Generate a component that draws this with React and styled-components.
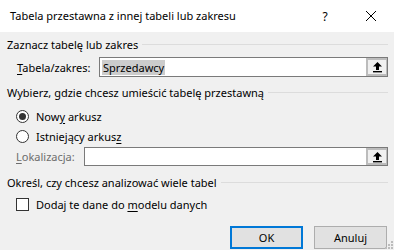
import React, { useState } from "react";
import styled, { createGlobalStyle } from "styled-components";

const GlobalStyle = createGlobalStyle`
  html, body {
    margin: 0;
    padding: 0;
    background: #f0f0f0;
  }
  * { box-sizing: border-box; }
`;

const Dialog = styled.div`
  width: 394px;
  height: 250px;
  background: #f0f0f0;
  font-family: "Noto Sans", "Open Sans", sans-serif;
  font-size: 11px;
  color: #000;
  position: relative;
  overflow: hidden;
`;

const TitleBar = styled.div`
  height: 32px;
  background: #fff;
  display: flex;
  align-items: center;
  padding-left: 10px;
  font-size: 11px;
`;

const Title = styled.div`
  flex: 1;
  padding-bottom: 2px;
`;

const TitleButton = styled.div`
  width: 46px;
  height: 32px;
  display: flex;
  align-items: center;
  justify-content: center;
  font-size: 12px;
`;

const Body = styled.div`
  padding: 3px 6px 0 7px;
`;

const GroupTitle = styled.div`
  display: flex;
  align-items: center;
  height: 18px;
  margin-top: ${p => p.top || 0}px;
  &::after {
    content: "";
    flex: 1;
    height: 1px;
    background: #dcdcdc;
    margin-left: 4px;
    margin-top: 1px;
  }
`;

const FieldRow = styled.div`
  display: flex;
  align-items: center;
  margin-top: ${p => p.top || 0}px;
  padding-left: ${p => p.indent || 10}px;
`;

const Label = styled.div`
  width: ${p => p.width}px;
  color: ${p => (p.disabled ? "#6d6d6d" : "#000")};
  u { text-decoration: underline; text-underline-offset: 2px; }
`;

const InputBox = styled.div`
  flex: 1;
  height: ${p => p.h || 20}px;
  background: #fff;
  border: 1px solid #7a7a7a;
  display: flex;
  align-items: center;
  padding-left: 2px;
`;

const Selected = styled.span`
  background: #cccccc;
  padding: 0 1px;
  line-height: 15px;
`;

const InputText = styled.div`
  flex: 1;
`;

const CollapseButton = styled.div`
  width: 21px;
  height: 100%;
  background: #f0f0f0;
  border: 2px solid #bcbcbc;
  border-right-width: 1px;
  display: flex;
  align-items: center;
  justify-content: center;
`;

const OptionRow = styled.label`
  display: flex;
  align-items: center;
  height: 20px;
  padding-left: 9px;
  margin-top: ${p => p.top || 0}px;
  u { text-decoration: underline; text-underline-offset: 2px; }
`;

const Radio = styled.span`
  width: 13px;
  height: 13px;
  border-radius: 50%;
  border: 1px solid #333;
  background: #fff;
  margin-right: 7px;
  display: flex;
  align-items: center;
  justify-content: center;
  &::after {
    content: "";
    width: 7px;
    height: 7px;
    border-radius: 50%;
    background: ${p => (p.checked ? "#333" : "transparent")};
  }
`;

const Checkbox = styled.span`
  width: 13px;
  height: 13px;
  border: 1px solid #333;
  background: #fff;
  margin-right: 7px;
`;

const Footer = styled.div`
  display: flex;
  justify-content: flex-end;
  gap: 11px;
  padding-right: 1px;
  margin-top: 12px;
`;

const Button = styled.button`
  width: 73px;
  height: 23px;
  font-family: inherit;
  font-size: 11px;
  color: #000;
  background: #e1e1e1;
  border: ${p => (p.primary ? "2px solid #0078d7" : "1px solid #adadad")};
  padding: 0;
`;

const Grip = styled.svg`
  position: absolute;
  right: 1px;
  bottom: 1px;
`;

const UploadIcon = () => (
  <svg width="11" height="12" viewBox="0 0 11 12">
    <path d="M5.5 1 L10 5.5 L7 5.5 L7 9 L4 9 L4 5.5 L1 5.5 Z" fill="#000" />
    <rect x="1" y="10" width="9" height="1.4" fill="#000" />
  </svg>
);

export default function App() {
  const [newSheet, setNewSheet] = useState(true);
  const [model, setModel] = useState(false);

  return (
    <>
      <GlobalStyle />
      <Dialog>
        <TitleBar>
          <Title>Tabela przestawna z innej tabeli lub zakresu</Title>
          <TitleButton>?</TitleButton>
          <TitleButton>
            <svg width="12" height="12" viewBox="0 0 12 12">
              <path d="M1 1 L11 11 M11 1 L1 11" stroke="#000" strokeWidth="1" />
            </svg>
          </TitleButton>
        </TitleBar>
        <Body>
          <GroupTitle>Zaznacz tabelę lub zakres</GroupTitle>
          <FieldRow top={4}>
            <Label width={82}><u>T</u>abela/zakres:</Label>
            <InputBox>
              <InputText><Selected>Sprzedawcy</Selected></InputText>
              <CollapseButton><UploadIcon /></CollapseButton>
            </InputBox>
          </FieldRow>
          <GroupTitle top={6}>Wybierz, gdzie chcesz umieścić tabelę przestawną</GroupTitle>
          <OptionRow top={5} onClick={() => setNewSheet(true)}>
            <Radio checked={newSheet} />
            <span>Now<u>y</u> arkusz</span>
          </OptionRow>
          <OptionRow onClick={() => setNewSheet(false)}>
            <Radio checked={!newSheet} />
            <span>Istniejący arkus<u>z</u></span>
          </OptionRow>
          <FieldRow top={1} indent={9}>
            <Label width={68} disabled><u>L</u>okalizacja:</Label>
            <InputBox h={19}>
              <InputText />
              <CollapseButton><UploadIcon /></CollapseButton>
            </InputBox>
          </FieldRow>
          <GroupTitle top={7}>Określ, czy chcesz analizować wiele tabel</GroupTitle>
          <OptionRow top={3} onClick={() => setModel(!model)}>
            <Checkbox />
            <span>Dodaj te dane do <u>m</u>odelu danych</span>
          </OptionRow>
          <Footer>
            <Button primary>OK</Button>
            <Button>Anuluj</Button>
          </Footer>
        </Body>
        <Grip width="8" height="8" viewBox="0 0 8 8">
          <rect x="6" y="0" width="2" height="2" fill="#bcbcbc" />
          <rect x="3" y="3" width="2" height="2" fill="#bcbcbc" />
          <rect x="6" y="3" width="2" height="2" fill="#bcbcbc" />
          <rect x="0" y="6" width="2" height="2" fill="#bcbcbc" />
          <rect x="3" y="6" width="2" height="2" fill="#bcbcbc" />
          <rect x="6" y="6" width="2" height="2" fill="#bcbcbc" />
        </Grip>
      </Dialog>
    </>
  );
}
